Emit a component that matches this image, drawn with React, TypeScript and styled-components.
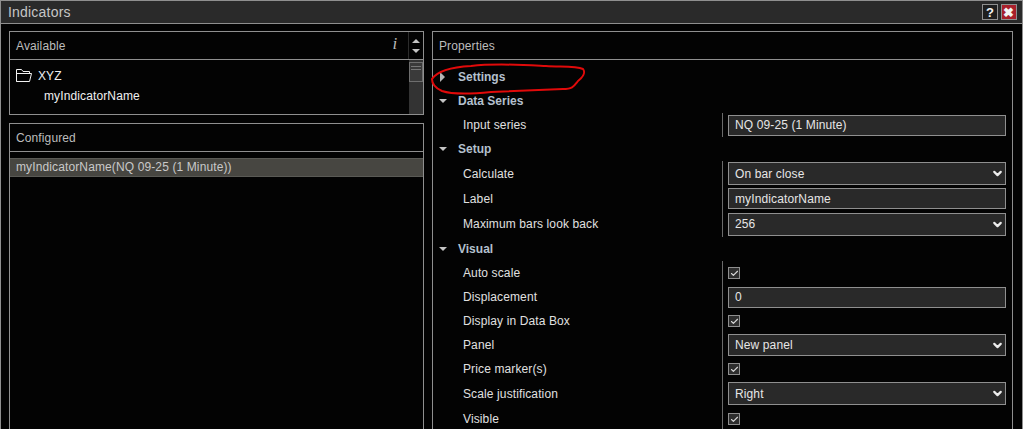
import React from 'react';
import styled, { createGlobalStyle } from 'styled-components';
import { Check, ChevronDown } from 'lucide-react';

const GlobalStyle = createGlobalStyle`
  html, body {
    margin: 0;
    height: 100%;
    overflow: hidden;
    background: #000;
  }
  #root { height: 100%; }
`;

const Line = '#8f8f8f';

const Window = styled.div`
  position: relative;
  box-sizing: border-box;
  width: 1023px;
  height: 429px;
  overflow: hidden;
  background: #030303;
  border-top: 1px solid ${Line};
  border-left: 1px solid ${Line};
  border-right: 1px solid ${Line};
  font-family: 'Liberation Sans', Arial, sans-serif;
  font-size: 12px;
  letter-spacing: 0.12px;
  color: #e4e4e4;
`;

const TitleBar = styled.div`
  box-sizing: border-box;
  height: 23px;
  display: flex;
  align-items: center;
  justify-content: space-between;
  padding: 0 5px 0 7px;
  background: #2a2a2a;
  border-bottom: 1px solid ${Line};
`;

const Title = styled.div`
  font-size: 14px;
  letter-spacing: 0.2px;
  color: #c6c6c6;
`;

const TitleButtons = styled.div`
  display: flex;
  gap: 3px;
`;

const TitleButton = styled.div<{ $danger?: boolean }>`
  box-sizing: border-box;
  width: 16px;
  height: 16px;
  display: flex;
  align-items: center;
  justify-content: center;
  border: 1px solid ${Line};
  background: ${(p) => (p.$danger ? '#a81f2b' : '#1e1e1e')};
  color: #f4f4f4;
  font-size: 13px;
  font-weight: bold;
`;

const Body = styled.div`
  display: grid;
  grid-template-columns: 415px 581px;
  column-gap: 8px;
  padding: 7px 10px 0 8px;
`;

const Column = styled.div`
  display: flex;
  flex-direction: column;
  gap: 8px;
`;

const Panel = styled.div<{ $height?: number }>`
  box-sizing: border-box;
  height: ${(p) => (p.$height ? `${p.$height}px` : 'auto')};
  border: 1px solid ${Line};
  background: #030303;
`;

const PanelHeader = styled.div`
  box-sizing: border-box;
  height: 28px;
  display: flex;
  align-items: center;
  justify-content: space-between;
  padding-left: 6px;
  border-bottom: 1px solid ${Line};
  color: #bdbdbd;
`;

const HeaderTools = styled.div`
  display: flex;
  align-items: stretch;
  height: 100%;
`;

const InfoMark = styled.span`
  width: 26px;
  line-height: 24px;
  font-family: 'Liberation Serif', serif;
  font-style: italic;
  font-size: 17px;
  text-align: center;
  color: #b8b8b8;
`;

const Spinner = styled.div`
  width: 14px;
  display: flex;
  flex-direction: column;
  align-items: center;
  justify-content: center;
  gap: 6px;
  border-left: 1px solid #2c2c2c;
`;

const Arrow = styled.div<{ $dir: 'up' | 'down' | 'right' }>`
  width: 0;
  height: 0;
  ${(p) =>
    p.$dir === 'right'
      ? `border-top: 5px solid transparent;
         border-bottom: 5px solid transparent;
         border-left: 5px solid #b4b4b4;`
      : `border-left: 4px solid transparent;
         border-right: 4px solid transparent;
         border-${p.$dir === 'up' ? 'bottom' : 'top'}: 4px solid #c4c4c4;`}
`;

const TreeArea = styled.div`
  display: flex;
  height: 54px;
`;

const TreeList = styled.div`
  flex: 1;
  padding: 6px 0 0 6px;
  color: #f0f0f0;
`;

const TreeRow = styled.div<{ $child?: boolean }>`
  height: 20px;
  display: flex;
  align-items: center;
  gap: 6px;
  padding-left: ${(p) => (p.$child ? '28px' : '0')};
`;

const FolderSvg = styled.svg`
  margin-bottom: 2px;
`;

const ScrollTrack = styled.div`
  width: 14px;
  background: #333;
`;

const ScrollThumb = styled.div`
  box-sizing: border-box;
  height: 20px;
  margin-top: 2px;
  padding-top: 3px;
  border: 1px solid #6e6e6e;
  background: #3a3a3a;
  &::before,
  &::after {
    content: '';
    display: block;
    height: 1px;
    margin: 0 1px 2px;
    background: #777;
  }
`;

const ConfiguredRow = styled.div`
  box-sizing: border-box;
  height: 19px;
  margin-top: 6px;
  padding-left: 6px;
  line-height: 17px;
  background: #474641;
  border-top: 1px solid #5a5a55;
  border-bottom: 1px solid #5a5a55;
  color: #c9c9c9;
`;

const ConfiguredBody = styled.div`
  height: 300px;
`;

const PropertyList = styled.div`
  padding-top: 5px;
`;

const GroupRow = styled.div`
  height: 24px;
  display: flex;
  align-items: center;
  font-weight: bold;
  letter-spacing: 0;
  color: #b4c0ce;
`;

const ArrowSlot = styled.div`
  width: 25px;
  display: flex;
  justify-content: center;
  padding-right: 6px;
  box-sizing: border-box;
`;

const PropRow = styled.div<{ $height: number }>`
  height: ${(p) => p.$height}px;
  display: grid;
  grid-template-columns: 289px 1fr;
`;

const PropLabel = styled.div`
  display: flex;
  align-items: center;
  padding-left: 30px;
  color: #e0e0e0;
`;

const PropValue = styled.div`
  display: flex;
  align-items: center;
  padding: 0 6px 0 5px;
  border-left: 1px solid #6a6a6a;
`;

const Field = styled.div<{ $height: number }>`
  box-sizing: border-box;
  width: 100%;
  height: ${(p) => p.$height}px;
  display: flex;
  align-items: center;
  justify-content: space-between;
  padding: 0 1px 0 6px;
  background: #292929;
  border: 1px solid ${Line};
  color: #e6e6e6;
`;

const CheckBox = styled.div`
  box-sizing: border-box;
  width: 12px;
  height: 12px;
  display: flex;
  align-items: center;
  justify-content: center;
  background: #2e2e2e;
  border: 1px solid ${Line};
  color: #d8d8d8;
`;

const Annotation = styled.svg`
  position: absolute;
  left: 0;
  top: 0;
  pointer-events: none;
`;

type Prop = {
  label: string;
  kind: 'text' | 'select' | 'check';
  value?: string;
  rowHeight?: number;
  fieldHeight?: number;
};

const groups: { name: string; props: Prop[] }[] = [
  { name: 'Data Series', props: [{ label: 'Input series', kind: 'text', value: 'NQ 09-25 (1 Minute)' }] },
  {
    name: 'Setup',
    props: [
      { label: 'Calculate', kind: 'select', value: 'On bar close', rowHeight: 25, fieldHeight: 23 },
      { label: 'Label', kind: 'text', value: 'myIndicatorName', rowHeight: 25, fieldHeight: 21 },
      { label: 'Maximum bars look back', kind: 'select', value: '256', rowHeight: 26, fieldHeight: 23 },
    ],
  },
  {
    name: 'Visual',
    props: [
      { label: 'Auto scale', kind: 'check' },
      { label: 'Displacement', kind: 'text', value: '0' },
      { label: 'Display in Data Box', kind: 'check' },
      { label: 'Panel', kind: 'select', value: 'New panel', fieldHeight: 22 },
      { label: 'Price marker(s)', kind: 'check' },
      { label: 'Scale justification', kind: 'select', value: 'Right', rowHeight: 25, fieldHeight: 23 },
      { label: 'Visible', kind: 'check', rowHeight: 26 },
    ],
  },
];

function PropertyRow({ prop }: { prop: Prop }): JSX.Element {
  return (
    <PropRow $height={prop.rowHeight ?? 24}>
      <PropLabel>{prop.label}</PropLabel>
      <PropValue>
        {prop.kind === 'check' ? (
          <CheckBox>
            <Check size={9} strokeWidth={3} />
          </CheckBox>
        ) : (
          <Field $height={prop.fieldHeight ?? 21}>
            {prop.value}
            {prop.kind === 'select' && <ChevronDown size={13} strokeWidth={4} color="#ececec" />}
          </Field>
        )}
      </PropValue>
    </PropRow>
  );
}

function FolderIcon(): JSX.Element {
  return (
    <FolderSvg width="16" height="14" viewBox="0 0 16 14" fill="none" stroke="#f2f2f2" strokeWidth="1">
      <path d="M0.5 13.5 V1.5 H5.5 L7 3.5 H13.5 V5.5" />
      <path d="M0.5 5.5 H15.5 L13.5 13.5 H0.5 Z" />
    </FolderSvg>
  );
}

export default function App(): JSX.Element {
  return (
    <Window>
      <GlobalStyle />
      <TitleBar>
        <Title>Indicators</Title>
        <TitleButtons>
          <TitleButton>?</TitleButton>
          <TitleButton $danger>✖</TitleButton>
        </TitleButtons>
      </TitleBar>
      <Body>
        <Column>
          <Panel $height={84}>
            <PanelHeader>
              Available
              <HeaderTools>
                <InfoMark>i</InfoMark>
                <Spinner>
                  <Arrow $dir="up" />
                  <Arrow $dir="down" />
                </Spinner>
              </HeaderTools>
            </PanelHeader>
            <TreeArea>
              <TreeList>
                <TreeRow>
                  <FolderIcon />
                  XYZ
                </TreeRow>
                <TreeRow $child>myIndicatorName</TreeRow>
              </TreeList>
              <ScrollTrack>
                <ScrollThumb />
              </ScrollTrack>
            </TreeArea>
          </Panel>
          <Panel>
            <PanelHeader>Configured</PanelHeader>
            <ConfiguredRow>myIndicatorName(NQ 09-25 (1 Minute))</ConfiguredRow>
            <ConfiguredBody />
          </Panel>
        </Column>
        <Panel>
          <PanelHeader>Properties</PanelHeader>
          <PropertyList>
            <GroupRow>
              <ArrowSlot>
                <Arrow $dir="right" />
              </ArrowSlot>
              Settings
            </GroupRow>
            {groups.map((group) => (
              <React.Fragment key={group.name}>
                <GroupRow>
                  <ArrowSlot>
                    <Arrow $dir="down" />
                  </ArrowSlot>
                  {group.name}
                </GroupRow>
                {group.props.map((prop) => (
                  <PropertyRow key={prop.label} prop={prop} />
                ))}
              </React.Fragment>
            ))}
          </PropertyList>
        </Panel>
      </Body>
      <Annotation width="1023" height="429" viewBox="0 0 1023 429">
        <path
          d="M431 78 C437 69 452 66 470 65 C495 62 525 64 545 65 C560 66 575 65 582 68 C585 72 581 77 577 80 C573 85 572 88 562 88 C535 89 510 90 490 91 C470 93 450 93 441 90 C434 87 431 82 431 78 Z"
          fill="none"
          stroke="#e10a0a"
          strokeWidth="2"
        />
      </Annotation>
    </Window>
  );
}
